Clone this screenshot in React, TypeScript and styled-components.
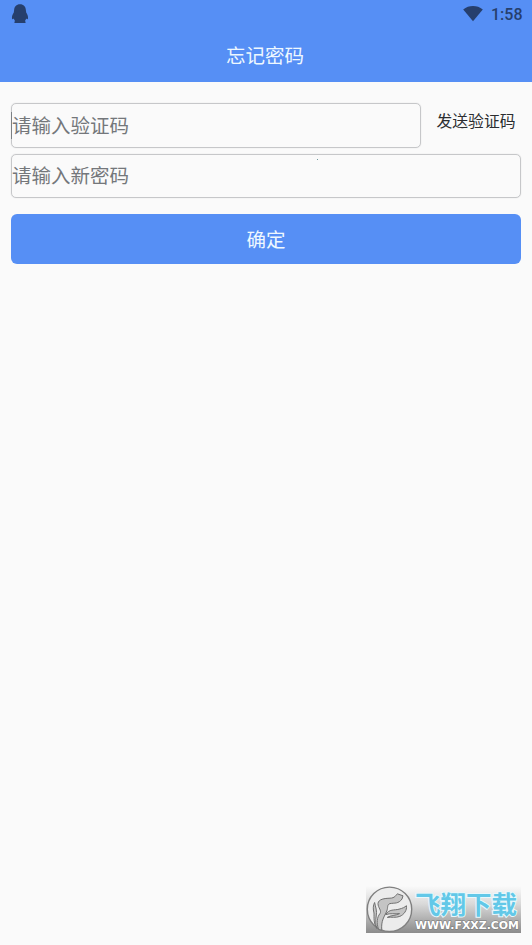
import styled, { createGlobalStyle } from 'styled-components';


const GlobalStyle = createGlobalStyle`
* {
    box-sizing: border-box;
}
body {
    margin: 0;
    background-color: #fafafa;
    font-family: Roboto, "Noto Sans CJK SC", sans-serif;
}
`;
const Page = styled.div`
position: relative;
width: 100%;
height: 945px;
background-color: #fafafa;
overflow: hidden;
`;
const Header = styled.header`
height: 82px;
background-color: #568ff5;
`;
const StatusBar = styled.div`
height: 28px;
display: flex;
align-items: center;
justify-content: space-between;
padding: 0 9.5px 0 11px;
color: #263f6d;
`;
const StatusRight = styled.div`
display: flex;
align-items: center;
gap: 8px;
`;
const Clock = styled.span`
font-size: 16px;
line-height: 28px;
font-weight: 500;
padding-top: 1px;
`;
const Title = styled.h1`
margin: 0;
height: 54px;
padding-right: 2px;
line-height: 57px;
text-align: center;
font-size: 19.5px;
font-weight: 400;
color: #eef8ff;
`;
const Form = styled.div`
padding: 20.5px 11px 0;
`;
const CodeRow = styled.div`
display: flex;
height: 45px;
margin-bottom: 6px;
`;
const Field = styled.div<{ $height: number; $grow?: boolean }>`
${(p) => (p.$grow ? 'flex: 1;' : '')}
height: ${(p) => p.$height}px;
display: flex;
align-items: center;
padding-top: 3px;
border: 1px solid #c6c7c9;
box-shadow: 0 0 1px #c6c7c9;
border-radius: 5px;
font-size: 19.5px;
line-height: 28px;
color: #74777b;
`;
const Caret = styled.i`
width: 1px;
height: 27px;
margin: -3px 0 0 -1px;
background-color: #7c8084;
`;
const SendCode = styled.button`
width: 100px;
height: 35px;
border: none;
padding: 0 0 0 10px;
background: none;
font-family: inherit;
font-size: 15.8px;
white-space: nowrap;
color: #2b2d30;
`;
const Submit = styled.button`
display: block;
width: 100%;
height: 50px;
margin-top: 16px;
padding: 0 0 1px;
border: none;
border-radius: 6px;
background-color: #568ff5;
font-family: inherit;
font-size: 19.5px;
color: #eef8ff;
`;
const Dot = styled.i`
position: absolute;
left: 317px;
top: 159px;
width: 1px;
height: 1px;
background-color: #6f9a9c;
`;
const Watermark = styled.div`
position: absolute;
right: 11px;
bottom: 12px;
width: 155px;
height: 47px;
background: linear-gradient(#fafafa 0%, #d9d9d9 38%, #8b8b8b 100%);
`;
const LogoSvg = styled.svg`
display: block;
`;

const Penguin = () => (
    <svg width="18" height="20" viewBox="0 0 18 20" fill="currentColor">
        <path d="M9 0.3C5.3 0.3 3.3 2.8 3.1 6.2L2.8 8.6C1.5 10.4 0.7 12.6 1 14.4c0.2 1.1 1 0.9 1.9 0.1 0.2 1 0.6 1.9 1.2 2.6 -0.7 0.5 -0.9 1.1 -0.6 1.8h11c0.3 -0.7 0.1 -1.3 -0.6 -1.8 0.6 -0.7 1 -1.6 1.2 -2.6 0.9 0.8 1.7 1 1.9 -0.1 0.3 -1.8 -0.5 -4 -1.8 -5.8L14.9 6.2C14.7 2.8 12.7 0.3 9 0.3z" />
    </svg>
);

const Wifi = () => (
    <svg width="20" height="16" viewBox="0 0 20 16" fill="currentColor">
        <path d="M0.2 3.4C5.8 -1.1 14.2 -1.1 19.8 3.4L10 15.2z" />
    </svg>
);

const Logo = () => (
    <LogoSvg width="155" height="47" viewBox="0 0 155 47">
        <circle cx="23.5" cy="23.3" r="22.2" fill="#ececec" stroke="#808080" strokeWidth="1.4" />
        <g fill="#c4c4c4" stroke="#707070" strokeWidth="1" strokeLinejoin="round">
            <path d="M8.6 16.5C9.5 21 11.3 25 10.2 30C9.4 35 9.8 39 10.8 42.5C7.2 36 8.2 32 8 27C6.8 23 7.2 19 8.6 16.5z" />
            <path d="M12.6 43.5C10.4 37 10.8 31.5 14 27.5C16 24.5 12 22 12 17.5C12.5 13 18.5 12.4 24 12.2C29 12 29.5 9.5 31.3 7.8L37 9.8L36 13C32.5 18 28.5 16.8 24 17.6C20.8 18.5 22.2 21.5 20.8 25C18.5 30.5 14.8 34.5 15.8 44.2z" />
            <path d="M19.7 28.6C23.2 22.8 28.2 24.5 33 23.2C36.5 22.3 38.8 21.3 40.4 19.7C41.3 24.2 37.8 28.8 33.8 30.4C29.5 32 25.5 30.8 21.3 31.4C24.5 29.2 29.5 29.8 33.5 27.6C29 28.2 24.5 27 19.7 28.6z" />
        </g>
        <text
            x="49"
            y="28"
            textLength="102"
            lengthAdjust="spacingAndGlyphs"
            fontFamily="'Liberation Sans', 'Noto Sans CJK SC', sans-serif"
            fontSize="25.5"
            fontWeight="700"
            fill="#62c8e8"
            stroke="#e8f8fc"
            strokeWidth="2"
            paintOrder="stroke"
        >
            飞翔下载
        </text>
        <text
            x="49"
            y="43"
            textLength="104"
            lengthAdjust="spacingAndGlyphs"
            fontFamily="'DejaVu Sans', sans-serif"
            fontSize="10.5"
            fontWeight="700"
            fill="#fff"
            stroke="#777"
            strokeWidth="1"
            paintOrder="stroke"
        >
            WWW.FXXZ.COM
        </text>
    </LogoSvg>
);

const App = () => {

    return (
        <Page>
            <GlobalStyle />
            <Header>
                <StatusBar>
                    <Penguin />
                    <StatusRight>
                        <Wifi />
                        <Clock>1:58</Clock>
                    </StatusRight>
                </StatusBar>
                <Title>忘记密码</Title>
            </Header>
            <Form>
                <CodeRow>
                    <Field $height={45} $grow>
                        <Caret />
                        请输入验证码
                    </Field>
                    <SendCode>发送验证码</SendCode>
                </CodeRow>
                <Field $height={44.5}>请输入新密码</Field>
                <Submit>确定</Submit>
            </Form>
            <Dot />
            <Watermark>
                <Logo />
            </Watermark>
        </Page>
    )
}

export default App
